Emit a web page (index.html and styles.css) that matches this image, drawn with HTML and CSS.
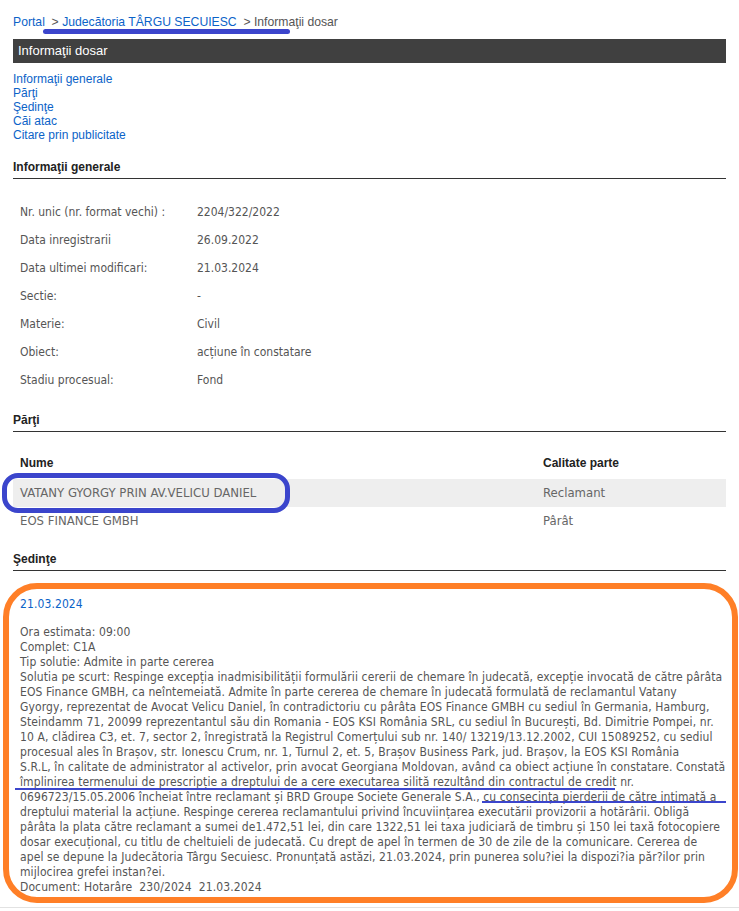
FILE: index.html
```html
<!DOCTYPE html>
<html lang="ro">
<head>
<meta charset="utf-8">
<title>Informaţii dosar</title>
<link rel="stylesheet" href="styles.css">
</head>
<body>
<div class="page">
  <div class="crumbs">
    <a class="lnk" href="#">Portal</a>&nbsp; &gt; <a class="lnk" href="#">Judecătoria TÂRGU SECUIESC</a>&nbsp; &gt; Informaţii dosar
    <span class="mark-crumb"></span>
  </div>
  <div class="titlebar">Informaţii dosar</div>
  <nav class="toc">
    <a class="lnk" href="#">Informaţii generale</a>
    <a class="lnk" href="#">Părţi</a>
    <a class="lnk" href="#">Şedinţe</a>
    <a class="lnk" href="#">Căi atac</a>
    <a class="lnk" href="#">Citare prin publicitate</a>
  </nav>

  <h2 class="sect">Informaţii generale</h2>
  <div class="info">
    <div class="lbl">Nr. unic (nr. format vechi) :</div><div class="val">2204/322/2022</div>
    <div class="lbl">Data inregistrarii</div><div class="val">26.09.2022</div>
    <div class="lbl">Data ultimei modificari:</div><div class="val">21.03.2024</div>
    <div class="lbl">Sectie:</div><div class="val">-</div>
    <div class="lbl">Materie:</div><div class="val">Civil</div>
    <div class="lbl">Obiect:</div><div class="val">acțiune în constatare</div>
    <div class="lbl">Stadiu procesual:</div><div class="val">Fond</div>
  </div>

  <h2 class="sect sect2">Părţi</h2>
  <div class="parti">
    <div class="prow phead"><div class="pname">Nume</div><div class="pcal">Calitate parte</div></div>
    <div class="prow alt"><div class="pname">VATANY GYORGY PRIN AV.VELICU DANIEL<span class="mark-oval"></span></div><div class="pcal">Reclamant</div></div>
    <div class="prow"><div class="pname">EOS FINANCE GMBH</div><div class="pcal">Pârât</div></div>
  </div>

  <h2 class="sect sect3">Şedinţe</h2>
  <div class="sedinta">
    <span class="mark-box"></span>
    <div class="date">21.03.2024</div>
    <div class="body">Ora estimata: 09:00<br>
Complet: C1A<br>
Tip solutie: Admite in parte cererea<br>
Solutia pe scurt: Respinge excepția inadmisibilității formulării cererii de chemare în judecată, excepție invocată de către pârâta<br>
EOS Finance GMBH, ca neîntemeiată. Admite în parte cererea de chemare în judecată formulată de reclamantul Vatany<br>
Gyorgy, reprezentat de Avocat Velicu Daniel, în contradictoriu cu pârâta EOS Finance GMBH cu sediul în Germania, Hamburg,<br>
Steindamm 71, 20099 reprezentantul său din Romania - EOS KSI România SRL, cu sediul în București, Bd. Dimitrie Pompei, nr.<br>
10 A, clădirea C3, et. 7, sector 2, înregistrată la Registrul Comerțului sub nr. 140/ 13219/13.12.2002, CUI 15089252, cu sediul<br>
procesual ales în Brașov, str. Ionescu Crum, nr. 1, Turnul 2, et. 5, Brașov Business Park, jud. Brașov, la EOS KSI România<br>
S.R.L, în calitate de administrator al activelor, prin avocat Georgiana Moldovan, având ca obiect acțiune în constatare. Constată<br>
împlinirea termenului de prescripție a dreptului de a cere executarea silită rezultând din contractul de credit nr.<br>
0696723/15.05.2006 încheiat între reclamant și BRD Groupe Societe Generale S.A., cu consecința pierderii de către intimată a<br>
dreptului material la acțiune. Respinge cererea reclamantului privind încuviințarea executării provizorii a hotărârii. Obligă<br>
pârâta la plata către reclamant a sumei de1.472,51 lei, din care 1322,51 lei taxa judiciară de timbru și 150 lei taxă fotocopiere<br>
dosar execuțional, cu titlu de cheltuieli de judecată. Cu drept de apel în termen de 30 de zile de la comunicare. Cererea de<br>
apel se depune la Judecătoria Târgu Secuiesc. Pronunțată astăzi, 21.03.2024, prin punerea solu?iei la dispozi?ia păr?ilor prin<br>
mijlocirea grefei instan?ei.<br>
Document: Hotarâre&nbsp; 230/2024&nbsp; 21.03.2024</div>
    <span class="mark-line1"></span>
    <span class="mark-line2"></span>
  </div>
</div>
<div class="bottomrule"></div>
</body>
</html>
```
FILE: styles.css
```css
html, body {
  margin: 0;
  padding: 0;
  background: #fff;
}
body {
  font-family: "Liberation Sans", Arial, sans-serif;
  color: #333;
}
.page {
  width: 713px;
  margin: 0 0 0 13px;
  padding-top: 14px;
}
.lnk {
  color: #0b63c8;
  text-decoration: none;
}
.crumbs {
  position: relative;
  font-size: 12.2px;
  line-height: 16px;
  color: #555;
  height: 20px;
}
.mark-crumb {
  position: absolute;
  left: 30px;
  top: 15px;
  width: 247px;
  height: 5px;
  border-radius: 3px;
  background: #3b45cc;
}
.titlebar {
  margin-top: 5px;
  height: 24px;
  line-height: 24px;
  background: #404040;
  color: #fff;
  font-size: 13px;
  padding-left: 5px;
}
.toc {
  display: flex;
  flex-direction: column;
  margin-top: 9px;
  font-size: 12px;
  line-height: 14px;
}
.sect {
  margin: 18px 0 0 0;
  font-size: 12px;
  line-height: 14px;
  font-weight: bold;
  color: #222;
  padding-bottom: 4px;
  border-bottom: 1px solid #333;
}
.info {
  display: grid;
  grid-template-columns: 184px 1fr;
  margin-top: 19px;
  font-family: "DejaVu Sans Condensed", "DejaVu Sans", sans-serif;
  font-size: 12px;
  color: #555;
}
.lbl, .val {
  height: 28px;
  line-height: 28px;
}
.lbl {
  padding-left: 7px;
}
.sect2 {
  margin-top: 19px;
}
.parti {
  margin-top: 17px;
  font-size: 12px;
}
.prow {
  display: flex;
  height: 28px;
  line-height: 28px;
}
.phead {
  height: 30px;
  font-weight: bold;
  color: #222;
}
.prow.alt {
  background: #eee;
}
.prow:not(.phead) {
  font-family: "DejaVu Sans Condensed", "DejaVu Sans", sans-serif;
  font-size: 13px;
  color: #666;
}
.pname {
  position: relative;
  flex: 0 0 530px;
  box-sizing: border-box;
  padding-left: 7px;
}
.pcal {
  flex: 1;
}
.mark-oval {
  position: absolute;
  left: -11px;
  top: -6px;
  width: 278px;
  height: 30px;
  border: 5px solid #3b45cc;
  border-radius: 16px;
}
.sect3 {
  margin-top: 17px;
}
.sedinta {
  position: relative;
  padding: 26px 0 0 7px;
  font-family: "DejaVu Sans Condensed", "DejaVu Sans", sans-serif;
  font-size: 12px;
  letter-spacing: 0.1px;
  height: 310px;
}
.date {
  color: #0b63c8;
  line-height: 15px;
}
.body {
  margin-top: 13px;
  line-height: 15px;
  color: #555;
  white-space: nowrap;
}
.mark-box {
  position: absolute;
  left: -10px;
  top: 12px;
  width: 723px;
  height: 308px;
  border: 6px solid #ff7f27;
  border-radius: 34px;
}
.mark-line1 {
  position: absolute;
  left: 2px;
  top: 217px;
  width: 600px;
  height: 2px;
  background: #3b45cc;
}
.mark-line2 {
  position: absolute;
  left: 469px;
  top: 230px;
  width: 244px;
  height: 2px;
  background: #3b45cc;
}
.bottomrule {
  height: 1px;
  background: #e2e2e2;
}
```
